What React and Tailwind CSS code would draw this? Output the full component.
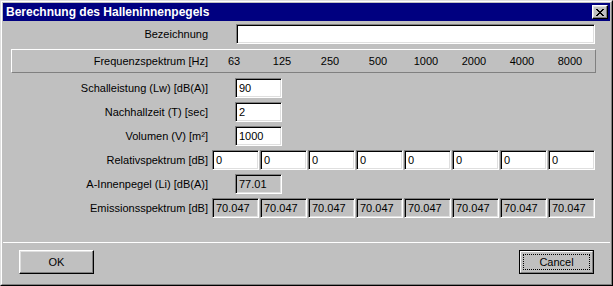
import React from 'react'

const sunken =
  'border border-t-[#808080] border-l-[#808080] border-b-white border-r-white shadow-[inset_1px_1px_0_#000,inset_-1px_-1px_0_#dfdfdf]'
const raised =
  'border border-t-white border-l-white border-b-black border-r-black shadow-[inset_-1px_-1px_0_#808080,inset_1px_1px_0_#dfdfdf]'

const freqs = ['63', '125', '250', '500', '1000', '2000', '4000', '8000']

function Field({ value, readOnly, className = '' }) {
  return (
    <div
      className={`h-[20px] flex items-center pl-[3px] leading-none ${sunken} ${
        readOnly ? 'bg-[#c0c0c0]' : 'bg-white'
      } ${className}`}
    >
      {value}
    </div>
  )
}

function Row({ label, children, className = '' }) {
  return (
    <div className={`flex items-center h-[20px] ${className}`}>
      <div className="w-[205px] shrink-0 text-right leading-none">{label}</div>
      {children}
    </div>
  )
}

export default function App() {
  const relativ = Array(8).fill('0')
  const emission = Array(8).fill('70.047')

  return (
    <div className="w-[613px] h-[286px] bg-[#c0c0c0] border border-t-[#dfdfdf] border-l-[#dfdfdf] border-b-black border-r-black font-['Liberation_Sans',Arial,sans-serif] text-[11px] text-black select-none">
      <div className="h-full flex flex-col border border-t-white border-l-white border-b-[#808080] border-r-[#808080] p-px">
        {/* title bar */}
        <div className="h-[18px] shrink-0 bg-[#000080] flex items-center justify-between pl-[3px] pr-[2px]">
          <span className="text-white font-bold text-[12px] leading-none">Berechnung des Halleninnenpegels</span>
          <div className={`w-[16px] h-[14px] bg-[#c0c0c0] flex items-center justify-center ${raised}`}>
            <svg width="8" height="7" viewBox="0 0 8 7" shapeRendering="crispEdges">
              <path
                fill="#000"
                d="M0 0h2v1H0zM6 0h2v1H6zM1 1h2v1H1zM5 1h2v1H5zM2 2h4v1H2zM3 3h2v1H3zM2 4h4v1H2zM1 5h2v1H1zM5 5h2v1H5zM0 6h2v1H0zM6 6h2v1H6z"
              />
            </svg>
          </div>
        </div>

        {/* Bezeichnung */}
        <Row label="Bezeichnung" className="mt-[3px]">
          <Field value="" className="ml-[28px] w-[359px]" />
        </Row>

        {/* frequency header panel */}
        <div className="mt-[5px] ml-[8px] w-[585px] h-[24px] shrink-0 flex items-center border border-t-white border-l-white border-b-[#808080] border-r-[#808080]">
          <div className="w-[196px] text-right leading-none">Frequenzspektrum [Hz]</div>
          <div className="flex ml-[2px]">
            {freqs.map(f => (
              <div key={f} className="w-[48px] text-center leading-none">
                {f}
              </div>
            ))}
          </div>
        </div>

        <Row label="Schalleistung (Lw) [dB(A)]" className="mt-[5px]">
          <Field value="90" className="ml-[27px] w-[47px]" />
        </Row>
        <Row label="Nachhallzeit (T) [sec]" className="mt-[4px]">
          <Field value="2" className="ml-[27px] w-[47px]" />
        </Row>
        <Row label="Volumen (V) [m²]" className="mt-[4px]">
          <Field value="1000" className="ml-[27px] w-[47px]" />
        </Row>
        <Row label="Relativspektrum [dB]" className="mt-[4px]">
          <div className="flex gap-[1px] ml-[4px]">
            {relativ.map((v, i) => (
              <Field key={i} value={v} className="w-[47px]" />
            ))}
          </div>
        </Row>
        <Row label="A-Innenpegel (Li) [dB(A)]" className="mt-[4px]">
          <Field value="77.01" readOnly className="ml-[27px] w-[47px]" />
        </Row>
        <Row label="Emissionsspektrum [dB]" className="mt-[4px]">
          <div className="flex gap-[1px] ml-[4px]">
            {emission.map((v, i) => (
              <Field key={i} value={v} readOnly className="w-[47px]" />
            ))}
          </div>
        </Row>

        <div className="flex-1" />

        {/* button bar */}
        <div className="h-[41px] shrink-0 border-t border-white flex items-start justify-between px-[16px] pt-[7px]">
          <button className={`w-[75px] h-[24px] bg-[#c0c0c0] leading-none ${raised}`}>OK</button>
          <div className="w-[75px] h-[24px] border border-black">
            <div className="h-full border border-t-white border-l-white border-b-[#808080] border-r-[#808080] p-[2px]">
              <div className="h-full border border-dotted border-black flex items-center justify-center leading-none">
                Cancel
              </div>
            </div>
          </div>
        </div>
      </div>
    </div>
  )
}
